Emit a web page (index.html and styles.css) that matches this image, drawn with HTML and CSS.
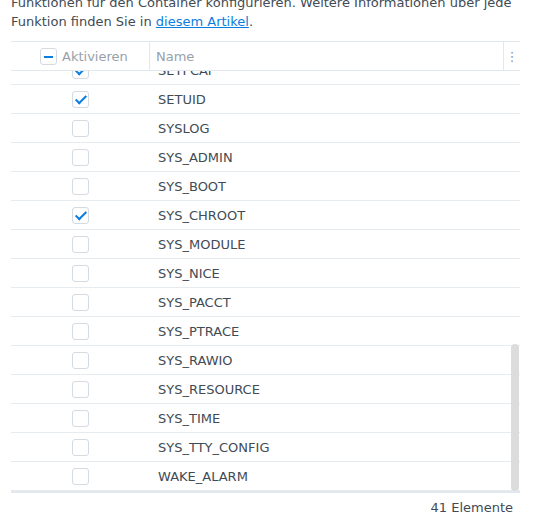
FILE: index.html
```html
<!DOCTYPE html>
<html lang="de">
<head>
  <meta charset="UTF-8">
  <title>Funktionen</title>
  <link rel="stylesheet" href="styles.css">
</head>
<body>
  <div class="panel">
    <p class="intro">Funktionen für den Container konfigurieren. Weitere Informationen über jede<br>Funktion finden Sie in <a href="#">diesem Artikel</a>.</p>

    <div class="grid">
      <div class="grid-head">
        <div class="col-check head-check">
          <span class="box box-mixed"></span>
          <span class="head-label">Aktivieren</span>
        </div>
        <div class="col-name head-label">Name</div>
        <div class="col-menu">&#8942;</div>
      </div>

      <div class="grid-body">
        <div class="rows">
          <div class="row"><div class="col-check"><span class="box checked"></span></div><div class="col-name">SETFCAP</div></div>
          <div class="row"><div class="col-check"><span class="box checked"></span></div><div class="col-name">SETUID</div></div>
          <div class="row"><div class="col-check"><span class="box"></span></div><div class="col-name">SYSLOG</div></div>
          <div class="row"><div class="col-check"><span class="box"></span></div><div class="col-name">SYS_ADMIN</div></div>
          <div class="row"><div class="col-check"><span class="box"></span></div><div class="col-name">SYS_BOOT</div></div>
          <div class="row"><div class="col-check"><span class="box checked"></span></div><div class="col-name">SYS_CHROOT</div></div>
          <div class="row"><div class="col-check"><span class="box"></span></div><div class="col-name">SYS_MODULE</div></div>
          <div class="row"><div class="col-check"><span class="box"></span></div><div class="col-name">SYS_NICE</div></div>
          <div class="row"><div class="col-check"><span class="box"></span></div><div class="col-name">SYS_PACCT</div></div>
          <div class="row"><div class="col-check"><span class="box"></span></div><div class="col-name">SYS_PTRACE</div></div>
          <div class="row"><div class="col-check"><span class="box"></span></div><div class="col-name">SYS_RAWIO</div></div>
          <div class="row"><div class="col-check"><span class="box"></span></div><div class="col-name">SYS_RESOURCE</div></div>
          <div class="row"><div class="col-check"><span class="box"></span></div><div class="col-name">SYS_TIME</div></div>
          <div class="row"><div class="col-check"><span class="box"></span></div><div class="col-name">SYS_TTY_CONFIG</div></div>
          <div class="row"><div class="col-check"><span class="box"></span></div><div class="col-name">WAKE_ALARM</div></div>
        </div>
        <div class="scrollbar"></div>
      </div>

      <div class="grid-foot">41 Elemente</div>
    </div>
  </div>
</body>
</html>
```

FILE: styles.css
```css
body {
  margin: 0;
  background: #fff;
  font-family: "DejaVu Sans", Verdana, sans-serif;
  font-size: 13px;
  color: #414b55;
}
.panel {
  width: 509px;
  padding: 0 15px 0 11px;
}
.intro {
  margin: -7px 0 0 0;
  line-height: 19px;
  white-space: nowrap;
}
.intro a {
  color: #0a7de0;
  text-decoration: underline;
}
.grid {
  margin-top: 10px;
  border-top: 1px solid #e3e8ee;
}
.grid-head,
.row {
  display: grid;
  grid-template-columns: 139px 1fr 16px;
  align-items: center;
}
.grid-head {
  height: 28px;
  border-bottom: 1px solid #e3e8ee;
}
.grid-head > div {
  height: 100%;
  display: flex;
  align-items: center;
}
.head-check {
  padding-left: 29px;
  border-right: 1px solid #e3e8ee;
  gap: 5px;
}
.head-label {
  color: #97a1ab;
}
.grid-head .col-name {
  padding-left: 6px;
  border-right: 1px solid #e3e8ee;
}
.col-menu {
  justify-content: center;
  color: #8a939c;
  font-size: 13px;
}
.grid-body {
  position: relative;
  height: 420px;
  overflow: hidden;
}
.rows {
  margin-top: -15px;
}
.row {
  height: 28px;
  border-bottom: 1px solid #e6ebf0;
}
.row .col-check {
  display: flex;
  justify-content: center;
}
.row .col-name {
  padding-left: 8px;
}
.box {
  box-sizing: border-box;
  width: 17px;
  height: 17px;
  border: 1px solid #d3dae2;
  border-radius: 3px;
  background: #fff;
  position: relative;
  display: inline-block;
}
.box.checked::after {
  content: "";
  position: absolute;
  left: 5px;
  top: 1px;
  width: 4px;
  height: 9px;
  border: solid #0a7de0;
  border-width: 0 2.5px 2.5px 0;
  transform: rotate(45deg);
}
.box-mixed::after {
  content: "";
  position: absolute;
  left: 3px;
  top: 7px;
  width: 9px;
  height: 2px;
  background: #0a7de0;
}
.scrollbar {
  position: absolute;
  right: 1px;
  top: 273px;
  width: 8px;
  height: 147px;
  border-radius: 4px;
  background: #dcdcdc;
}
.grid-foot {
  height: 28px;
  border-top: 2px solid #e3e8ee;
  border-bottom: 1px solid #e3e8ee;
  display: flex;
  align-items: center;
  justify-content: flex-end;
  padding-right: 7px;
  color: #414b55;
}
```
